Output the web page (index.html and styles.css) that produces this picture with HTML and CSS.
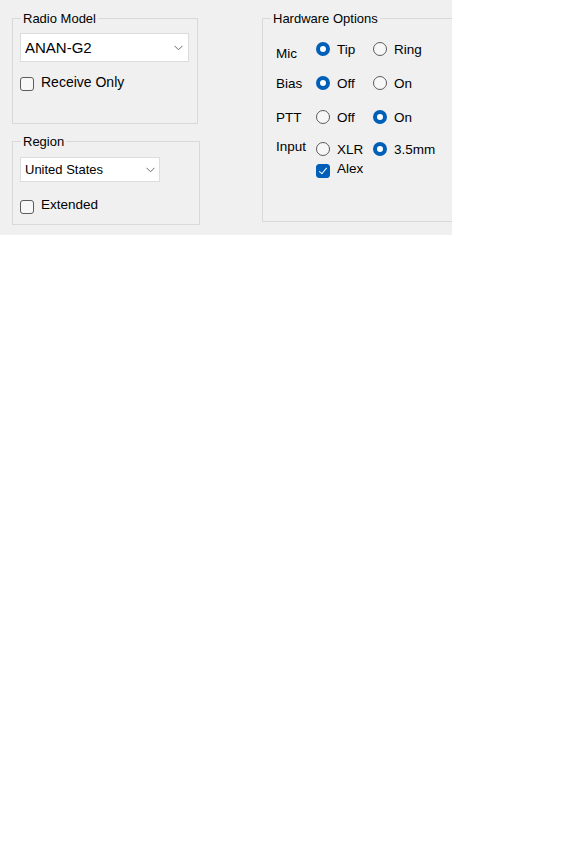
FILE: index.html
```html
<!DOCTYPE html>
<html lang="en">
<head>
  <meta charset="UTF-8" />
  <title>Radio Setup</title>
  <link rel="stylesheet" href="styles.css">
</head>
<body>

  <div class="panel">
    <div class="left-col">
      <div class="group group-model">
        <span class="group-title">Radio Model</span>
        <div class="combo combo-model">
          <span>ANAN-G2</span>
          <svg class="chev" width="9" height="6" viewBox="0 0 9 6"><path d="M0.5 0.8 L4.5 4.8 L8.5 0.8" /></svg>
        </div>
        <label class="check check-receive"><input type="checkbox"><span>Receive Only</span></label>
      </div>

      <div class="group group-region">
        <span class="group-title">Region</span>
        <div class="combo combo-region">
          <span>United States</span>
          <svg class="chev" width="9" height="6" viewBox="0 0 9 6"><path d="M0.5 0.8 L4.5 4.8 L8.5 0.8" /></svg>
        </div>
        <label class="check check-extended"><input type="checkbox"><span>Extended</span></label>
      </div>
    </div>

    <div class="group group-hw">
      <span class="group-title">Hardware Options</span>

      <div class="opt-row">
        <span class="opt-label label-mic">Mic</span>
        <label class="radio"><input type="radio" name="mic" checked><span>Tip</span></label>
        <label class="radio"><input type="radio" name="mic"><span>Ring</span></label>
      </div>
      <div class="opt-row">
        <span class="opt-label">Bias</span>
        <label class="radio"><input type="radio" name="bias" checked><span>Off</span></label>
        <label class="radio"><input type="radio" name="bias"><span>On</span></label>
      </div>
      <div class="opt-row">
        <span class="opt-label">PTT</span>
        <label class="radio"><input type="radio" name="ptt"><span>Off</span></label>
        <label class="radio"><input type="radio" name="ptt" checked><span>On</span></label>
      </div>
      <div class="opt-row row-input">
        <span class="opt-label label-input">Input</span>
        <label class="radio"><input type="radio" name="input"><span>XLR</span></label>
        <label class="radio"><input type="radio" name="input" checked><span>3.5mm</span></label>
      </div>
      <div class="alex-row">
        <label class="check"><input type="checkbox" checked><span>Alex</span></label>
      </div>
    </div>
  </div>

</body>
</html>
```

FILE: styles.css
```css
:root {
  --panel-bg: #f0f0f0;
  --group-border: #d9d9d9;
  --accent: #005fb8;
  --control-border: #5c5c5c;
  --text: #000000;
  --font: 'Liberation Sans', Arial, sans-serif;
}

* {
  box-sizing: border-box;
  margin: 0;
  padding: 0;
}

body {
  background: #ffffff;
  font-family: var(--font);
  color: var(--text);
}

.panel {
  width: 452px;
  height: 235px;
  background: var(--panel-bg);
  overflow: hidden;
  display: flex;
  align-items: flex-start;
  padding: 18px 0 0 12px;
}

.left-col {
  display: flex;
  flex-direction: column;
  gap: 17px;
}

/* group boxes */
.group {
  position: relative;
  border: 1px solid var(--group-border);
}

.group-title {
  position: absolute;
  top: -8px;
  left: 8px;
  padding: 0 2px;
  background: var(--panel-bg);
  font-size: 13px;
  line-height: 15px;
}

.group-model {
  width: 186px;
  height: 106px;
  padding: 14px 0 0 7px;
}

.group-region {
  width: 188px;
  height: 84px;
  padding: 15px 0 0 7px;
}

.group-hw {
  width: 200px;
  height: 204px;
  margin-left: 62px;
  padding: 13px 0 0 13px;
  flex-shrink: 0;
}

/* combo boxes */
.combo {
  display: flex;
  align-items: center;
  justify-content: space-between;
  background: #ffffff;
  border: 1px solid #dcdcdc;
  padding: 0 5px 0 4px;
}

.combo-model {
  width: 169px;
  height: 29px;
  font-size: 15px;
}

.combo-region {
  width: 140px;
  height: 25px;
  font-size: 13px;
  padding-right: 4px;
}

.chev path {
  fill: none;
  stroke: #6a6a6a;
  stroke-width: 1;
}

/* checkboxes */
.check {
  display: flex;
  align-items: flex-start;
  gap: 7px;
  font-size: 14px;
  line-height: 16px;
}

.check input {
  appearance: none;
  width: 14px;
  height: 14px;
  margin-top: 3px;
  border: 1px solid var(--control-border);
  border-radius: 3px;
  background: #f7f7f7;
  position: relative;
  flex-shrink: 0;
}

.check input:checked {
  background: var(--accent);
  border-color: var(--accent);
}

.check input:checked::after {
  content: '';
  position: absolute;
  left: 4px;
  top: 1px;
  width: 3px;
  height: 7px;
  border: solid #ffffff;
  border-width: 0 1.3px 1.3px 0;
  transform: rotate(40deg);
}

.check-receive {
  margin-top: 12px;
}

.check-extended {
  margin-top: 15px;
  font-size: 13.5px;
}

/* hardware options */
.opt-row {
  display: flex;
  align-items: center;
  height: 34px;
  font-size: 13.5px;
}

.row-input {
  height: 30px;
}

.opt-label {
  width: 40px;
}

.label-mic {
  margin-top: 8px;
}

.label-input {
  margin-bottom: 6px;
}

.radio {
  display: flex;
  align-items: center;
  gap: 7px;
  width: 57px;
}

.radio input {
  appearance: none;
  width: 14px;
  height: 14px;
  border: 1px solid var(--control-border);
  border-radius: 50%;
  background: #f7f7f7;
  flex-shrink: 0;
}

.radio input:checked {
  border: 4px solid var(--accent);
  background: #ffffff;
}

.alex-row {
  padding-left: 40px;
  margin-top: -3px;
}

.alex-row .check {
  font-size: 13.5px;
}
```
